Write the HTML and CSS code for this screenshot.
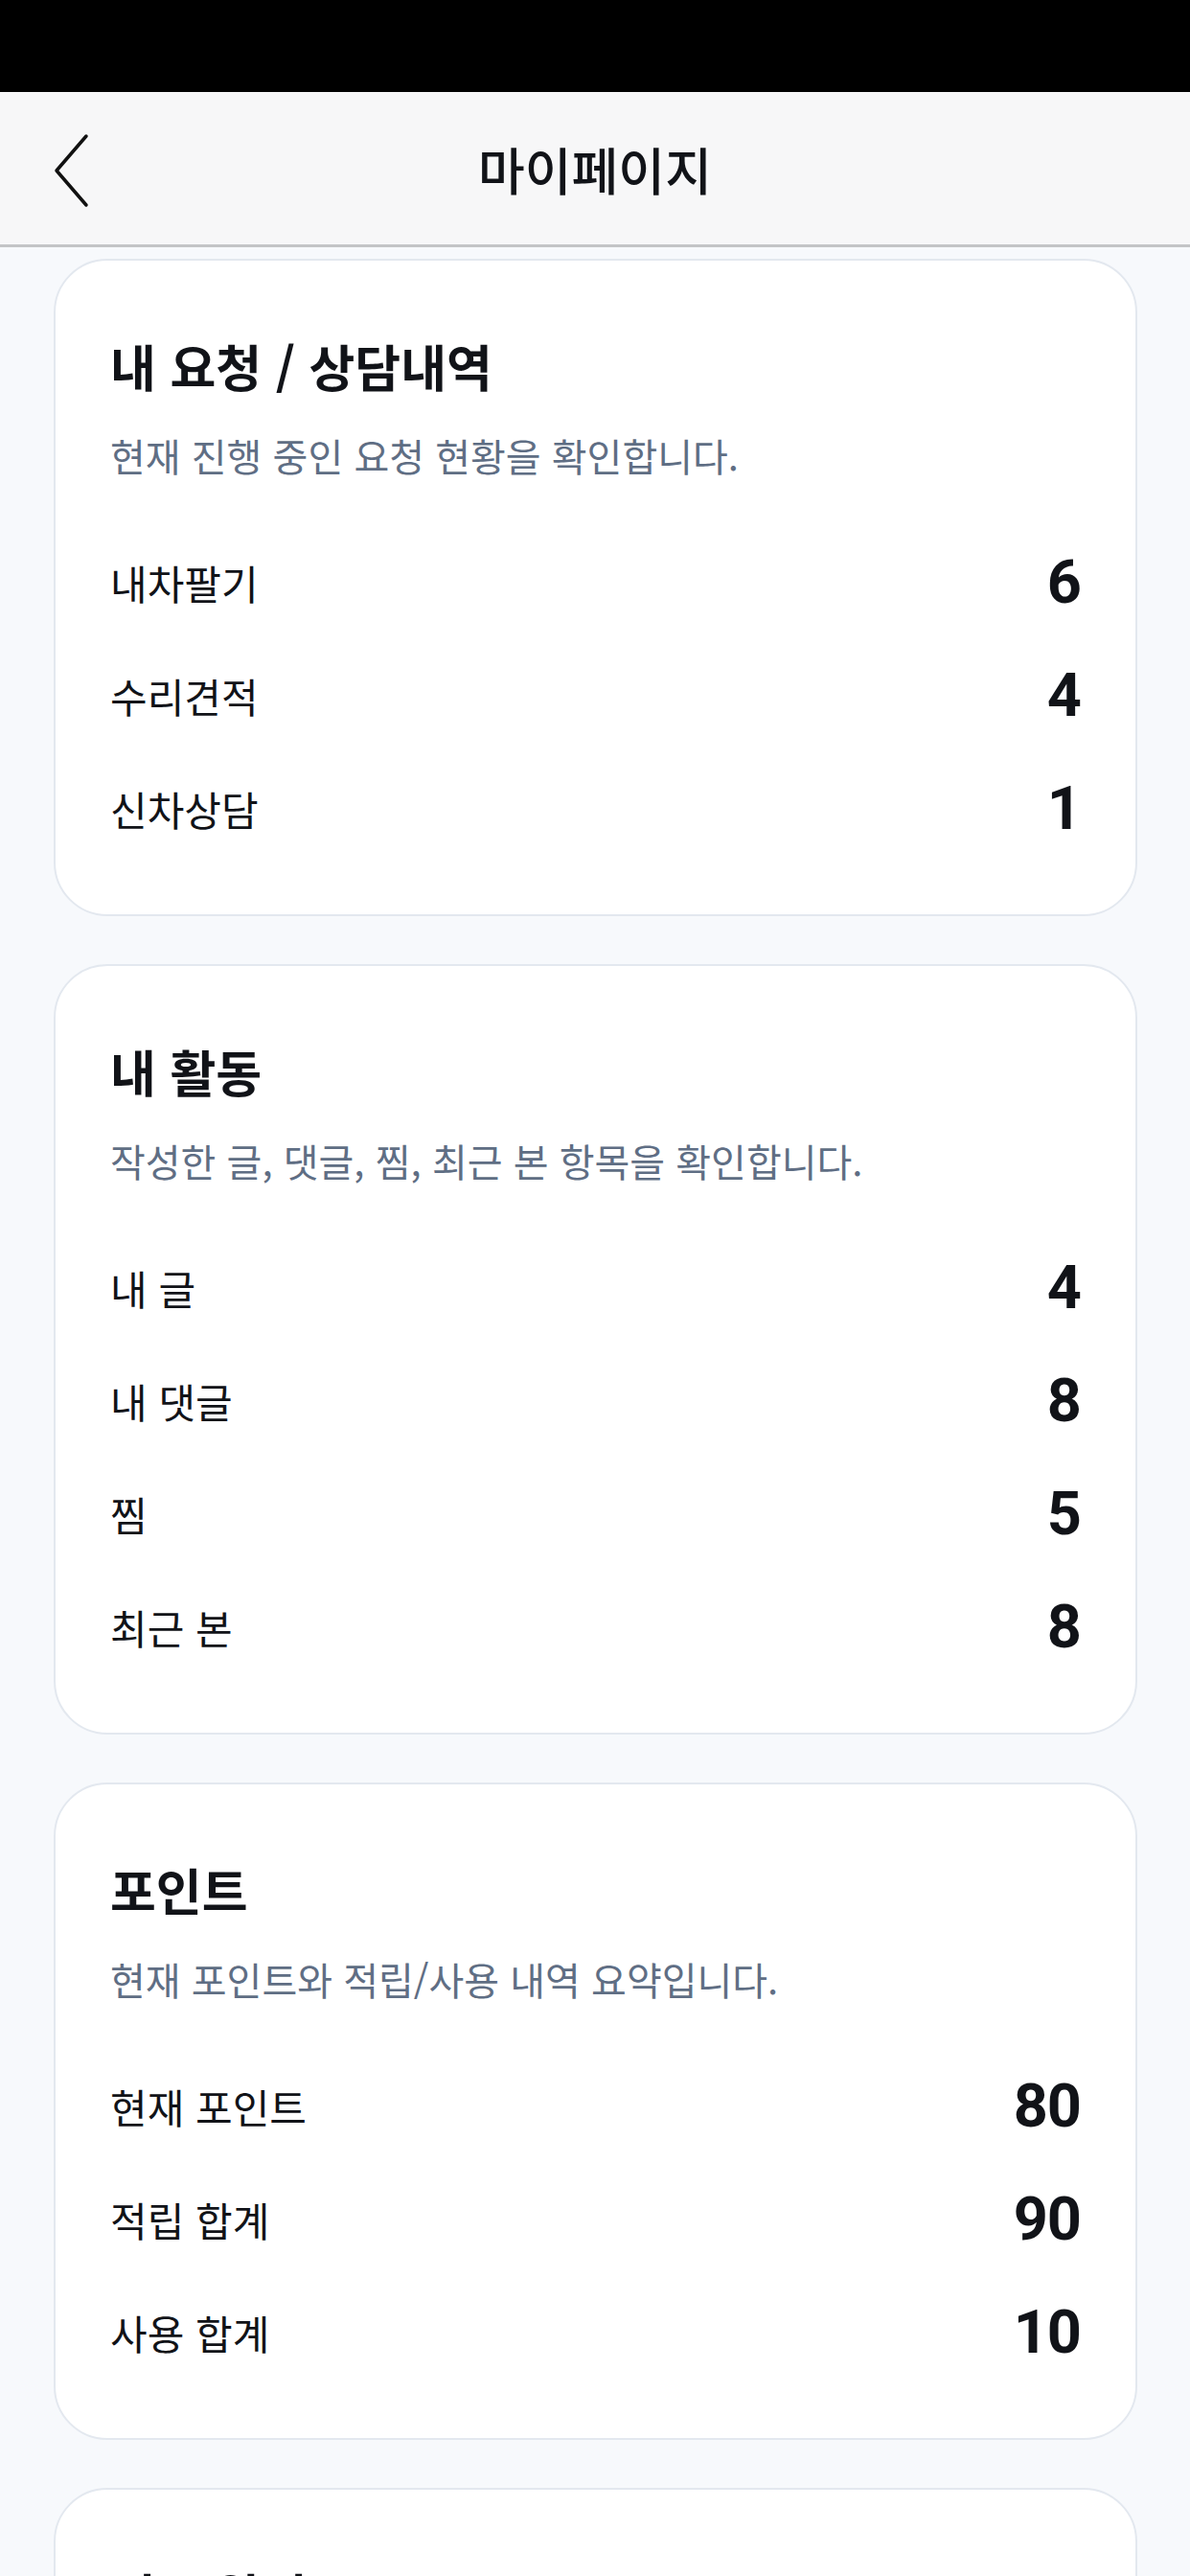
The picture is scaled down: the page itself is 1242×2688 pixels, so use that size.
FILE: index.html
```html
<!DOCTYPE html>
<html lang="ko">
<head>
  <meta charset="UTF-8" />
  <meta name="viewport" content="width=device-width, initial-scale=1" />
  <title>마이페이지</title>
  <link rel="stylesheet" href="styles.css">
</head>
<body>
<div class="statusbar"></div>

<header class="topbar">
  <a href="#" class="back" aria-label="뒤로">
    <svg width="40" height="80" viewBox="0 0 40 80" aria-hidden="true">
      <polyline points="35,4 4,40 35,76" fill="none" stroke="#111" stroke-width="3.5" stroke-linecap="round" stroke-linejoin="round"/>
    </svg>
  </a>
  <h1>마이페이지</h1>
  <span></span>
</header>

<main>
  <section class="card">
    <h2>내 요청 / 상담내역</h2>
    <p class="desc">현재 진행 중인 요청 현황을 확인합니다.</p>
    <ul class="rows">
      <li><span>내차팔기</span><strong>6</strong></li>
      <li><span>수리견적</span><strong>4</strong></li>
      <li><span>신차상담</span><strong>1</strong></li>
    </ul>
  </section>

  <section class="card">
    <h2>내 활동</h2>
    <p class="desc">작성한 글, 댓글, 찜, 최근 본 항목을 확인합니다.</p>
    <ul class="rows">
      <li><span>내 글</span><strong>4</strong></li>
      <li><span>내 댓글</span><strong>8</strong></li>
      <li><span>찜</span><strong>5</strong></li>
      <li><span>최근 본</span><strong>8</strong></li>
    </ul>
  </section>

  <section class="card">
    <h2>포인트</h2>
    <p class="desc">현재 포인트와 적립/사용 내역 요약입니다.</p>
    <ul class="rows">
      <li><span>현재 포인트</span><strong>80</strong></li>
      <li><span>적립 합계</span><strong>90</strong></li>
      <li><span>사용 합계</span><strong>10</strong></li>
    </ul>
  </section>

  <section class="card">
    <h2>지도 알림</h2>
    <p class="desc">설정한 알림 내역을 확인합니다.</p>
    <ul class="rows">
      <li><span>받은 알림</span><strong>3</strong></li>
    </ul>
  </section>
</main>
</body>
</html>
```

FILE: styles.css
```css
body {
  margin: 0;
  background: #f7f9fc;
  color: #111318;
  font-family: "Noto Sans CJK KR", "Noto Sans", sans-serif;
  overflow: hidden;
}
.statusbar {
  height: 96px;
  background: #000;
}
.topbar {
  height: 159px;
  background: #f7f7f8;
  border-bottom: 3px solid #c3c4c6;
  display: grid;
  grid-template-columns: 1fr auto 1fr;
  align-items: center;
}
.back {
  display: flex;
  padding-left: 55px;
  padding-top: 4px;
}
.topbar h1 {
  margin: 0;
  font-size: 53px;
  font-weight: 500;
  letter-spacing: 0;
  line-height: 60px;
}
main {
  padding: 12px 55px 40px 56px;
  display: flex;
  flex-direction: column;
  gap: 50px;
}
.card {
  background: #fff;
  border: 2px solid #e3e8ef;
  border-radius: 56px;
  padding: 80px 57px 52px 57px;
}
.card h2 {
  margin: 0;
  font-size: 52px;
  font-weight: 700;
  letter-spacing: 0;
  line-height: 60px;
}
.desc {
  margin: 38px 0 0;
  font-size: 40px;
  line-height: 50px;
  letter-spacing: 0;
  color: #5f6e84;
}
.rows {
  list-style: none;
  margin: 48px 0 0;
  padding: 0;
}
.rows li {
  height: 118px;
  display: flex;
  justify-content: space-between;
  align-items: center;
}
.rows span {
  font-size: 42px;
  letter-spacing: 0;
}
.rows strong {
  font-family: Roboto, "Liberation Sans", sans-serif;
  font-size: 63px;
  font-weight: 700;
  letter-spacing: -1px;
}
```
